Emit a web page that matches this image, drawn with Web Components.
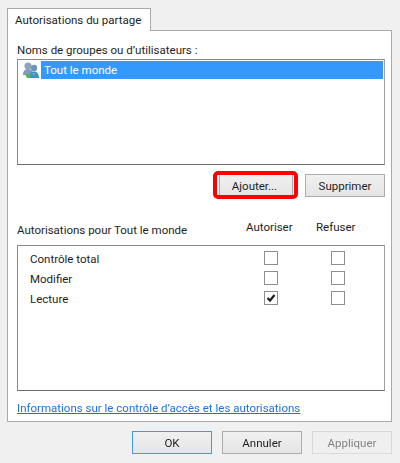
<!DOCTYPE html>
<html lang="fr">
<head>
<meta charset="utf-8">
<title>Autorisations du partage</title>
<style>
    html, body { margin: 0; background: #f0f0f0; }
    body { font: 11.5px/16px Roboto, sans-serif; color: #1e1e1e; }
</style>
</head>
<body>
<share-dialog></share-dialog>

<script>
class ListBox extends HTMLElement {
    constructor() {
        super();
        const shadow = this.attachShadow({ mode: 'open' });
        shadow.innerHTML = `
            <style>
                :host {
                    display: block;
                    box-sizing: border-box;
                    background: #fff;
                    border: 1px solid #8a8a8a;
                    border-color: #8a8a8a #a0a0a0 #6f6f6f #8a8a8a;
                    padding: 1px;
                }
            </style>
            <slot></slot>
        `;
    }
}

class DlgButton extends HTMLElement {
    constructor() {
        super();
        const shadow = this.attachShadow({ mode: 'open' });
        shadow.innerHTML = `
            <style>
                :host {
                    display: flex;
                    align-items: center;
                    justify-content: center;
                    box-sizing: border-box;
                    height: 23px;
                    background: linear-gradient(#f0f0f0, #e5e5e5);
                    border: 1px solid #acacac;
                }
                :host([primary]) { border-color: #3c9bf0; }
                :host([disabled]) {
                    background: #efefef;
                    border-color: #d9d9d9;
                    color: #838383;
                }
            </style>
            <slot></slot>
        `;
    }
}

class PermRow extends HTMLElement {
    constructor() {
        super();
        const shadow = this.attachShadow({ mode: 'open' });
        shadow.innerHTML = `
            <style>
                :host {
                    display: grid;
                    grid-template-columns: 234px 14px 53px 14px;
                    align-items: center;
                    height: 20px;
                    padding-left: 11px;
                }
                .box {
                    box-sizing: border-box;
                    width: 14px;
                    height: 14px;
                    background: #fff;
                    border: 1px solid #8e8e8e;
                    display: flex;
                }
                svg { width: 12px; height: 12px; }
                #label { padding-top: 1px; }
            </style>
            <span id="label"></span>
            <span class="box" id="allow"></span>
            <span></span>
            <span class="box"></span>
        `;
        shadow.getElementById('label').textContent = this.getAttribute('label');
        if (this.hasAttribute('checked')) {
            shadow.getElementById('allow').innerHTML =
                '<svg viewBox="0 0 12 12"><path d="M2.500 6 5 8.500 9.500 3" fill="none" stroke="#1c1c1c" stroke-width="2.200"/></svg>';
        }
    }
}

class ShareDialog extends HTMLElement {
    constructor() {
        super();
        const shadow = this.attachShadow({ mode: 'open' });
        shadow.innerHTML = `
            <style>
                :host {
                    display: block;
                    box-sizing: border-box;
                    width: 400px;
                    height: 463px;
                    padding: 8px 8px 0 7px;
                    overflow: hidden;
                    filter: blur(0.3px);
                }
                .tab {
                    position: relative;
                    z-index: 1;
                    box-sizing: border-box;
                    width: 144px;
                    height: 23px;
                    margin-bottom: -1px;
                    padding: 3px 0 0 7px;
                    background: #fff;
                    border: 1px solid #a9a9a9;
                    border-bottom: 0;
                }
                .panel {
                    box-sizing: border-box;
                    height: 392px;
                    background: #fff;
                    border: 1px solid #a9a9a9;
                    padding: 11px 6px 0 9px;
                }
                .caption { height: 17px; }
                .users { height: 106px; }
                .row {
                    display: flex;
                    align-items: center;
                    height: 18px;
                }
                .row svg { width: 22px; height: 18px; flex: none; }
                .row span {
                    flex: 1;
                    align-self: stretch;
                    padding-left: 3px;
                    background: #3399ff;
                    color: #fff;
                    line-height: 19px;
                }
                .actions {
                    display: flex;
                    justify-content: flex-end;
                    gap: 12px;
                    margin-top: 9px;
                }
                .add { width: 74px; padding-right: 3px; }
                .remove { width: 80px; }
                .add-mark {
                    position: relative;
                    display: block;
                }
                .add-mark::after {
                    content: "";
                    position: absolute;
                    inset: -3px -5px -2px -6px;
                    border: 4.5px solid #ff0000;
                    border-radius: 5px;
                }
                .perm-head {
                    display: grid;
                    grid-template-columns: 229px 70px auto;
                    align-items: start;
                    margin-top: 22px;
                    height: 26px;
                }
                .perm-head span:first-child { padding-top: 3px; }
                .perms { height: 146px; padding-top: 2px; }
                .help {
                    display: block;
                    margin-top: 9px;
                    color: #1a73d8;
                    text-decoration: underline;
                }
                .footer {
                    display: flex;
                    margin: 9px 0 0 125px;
                }
                .footer dlg-button { width: 80px; }
                .footer dlg-button + dlg-button { margin-left: 10px; }
            </style>
            <div class="tab">Autorisations du partage</div>
            <div class="panel">
                <div class="caption">Noms de groupes ou d’utilisateurs :</div>
                <list-box class="users">
                    <div class="row">
                        <svg viewBox="0 0 22 18">
                            <circle cx="9" cy="5" r="3.6" fill="#8fa3ba"/>
                            <path d="M4 14c0-4 2-6 5-6s5 2 5 6z" fill="#7f9cbc"/>
                            <circle cx="15" cy="7" r="3.200" fill="#6d96bf"/>
                            <path d="M10 17c0-4 2-6.500 5-6.500s5 2.500 5 6.500z" fill="#3f8fd0"/>
                            <path d="M6 13h6l-1 4H8z" fill="#55b05a"/>
                            <path d="M13 12h3l-1 3z" fill="#7cc24a"/>
                        </svg>
                        <span>Tout le monde</span>
                    </div>
                </list-box>
                <div class="actions">
                    <span class="add-mark"><dlg-button class="add">Ajouter...</dlg-button></span>
                    <dlg-button class="remove">Supprimer</dlg-button>
                </div>
                <div class="perm-head">
                    <span>Autorisations pour Tout le monde</span>
                    <span>Autoriser</span>
                    <span>Refuser</span>
                </div>
                <list-box class="perms">
                    <perm-row label="Contrôle total"></perm-row>
                    <perm-row label="Modifier"></perm-row>
                    <perm-row label="Lecture" checked></perm-row>
                </list-box>
                <a class="help">Informations sur le contrôle d’accès et les autorisations</a>
            </div>
            <div class="footer">
                <dlg-button primary>OK</dlg-button>
                <dlg-button>Annuler</dlg-button>
                <dlg-button disabled>Appliquer</dlg-button>
            </div>
        `;
    }
}

customElements.define('list-box', ListBox);
customElements.define('dlg-button', DlgButton);
customElements.define('perm-row', PermRow);
customElements.define('share-dialog', ShareDialog);
</script>
</body>
</html>
